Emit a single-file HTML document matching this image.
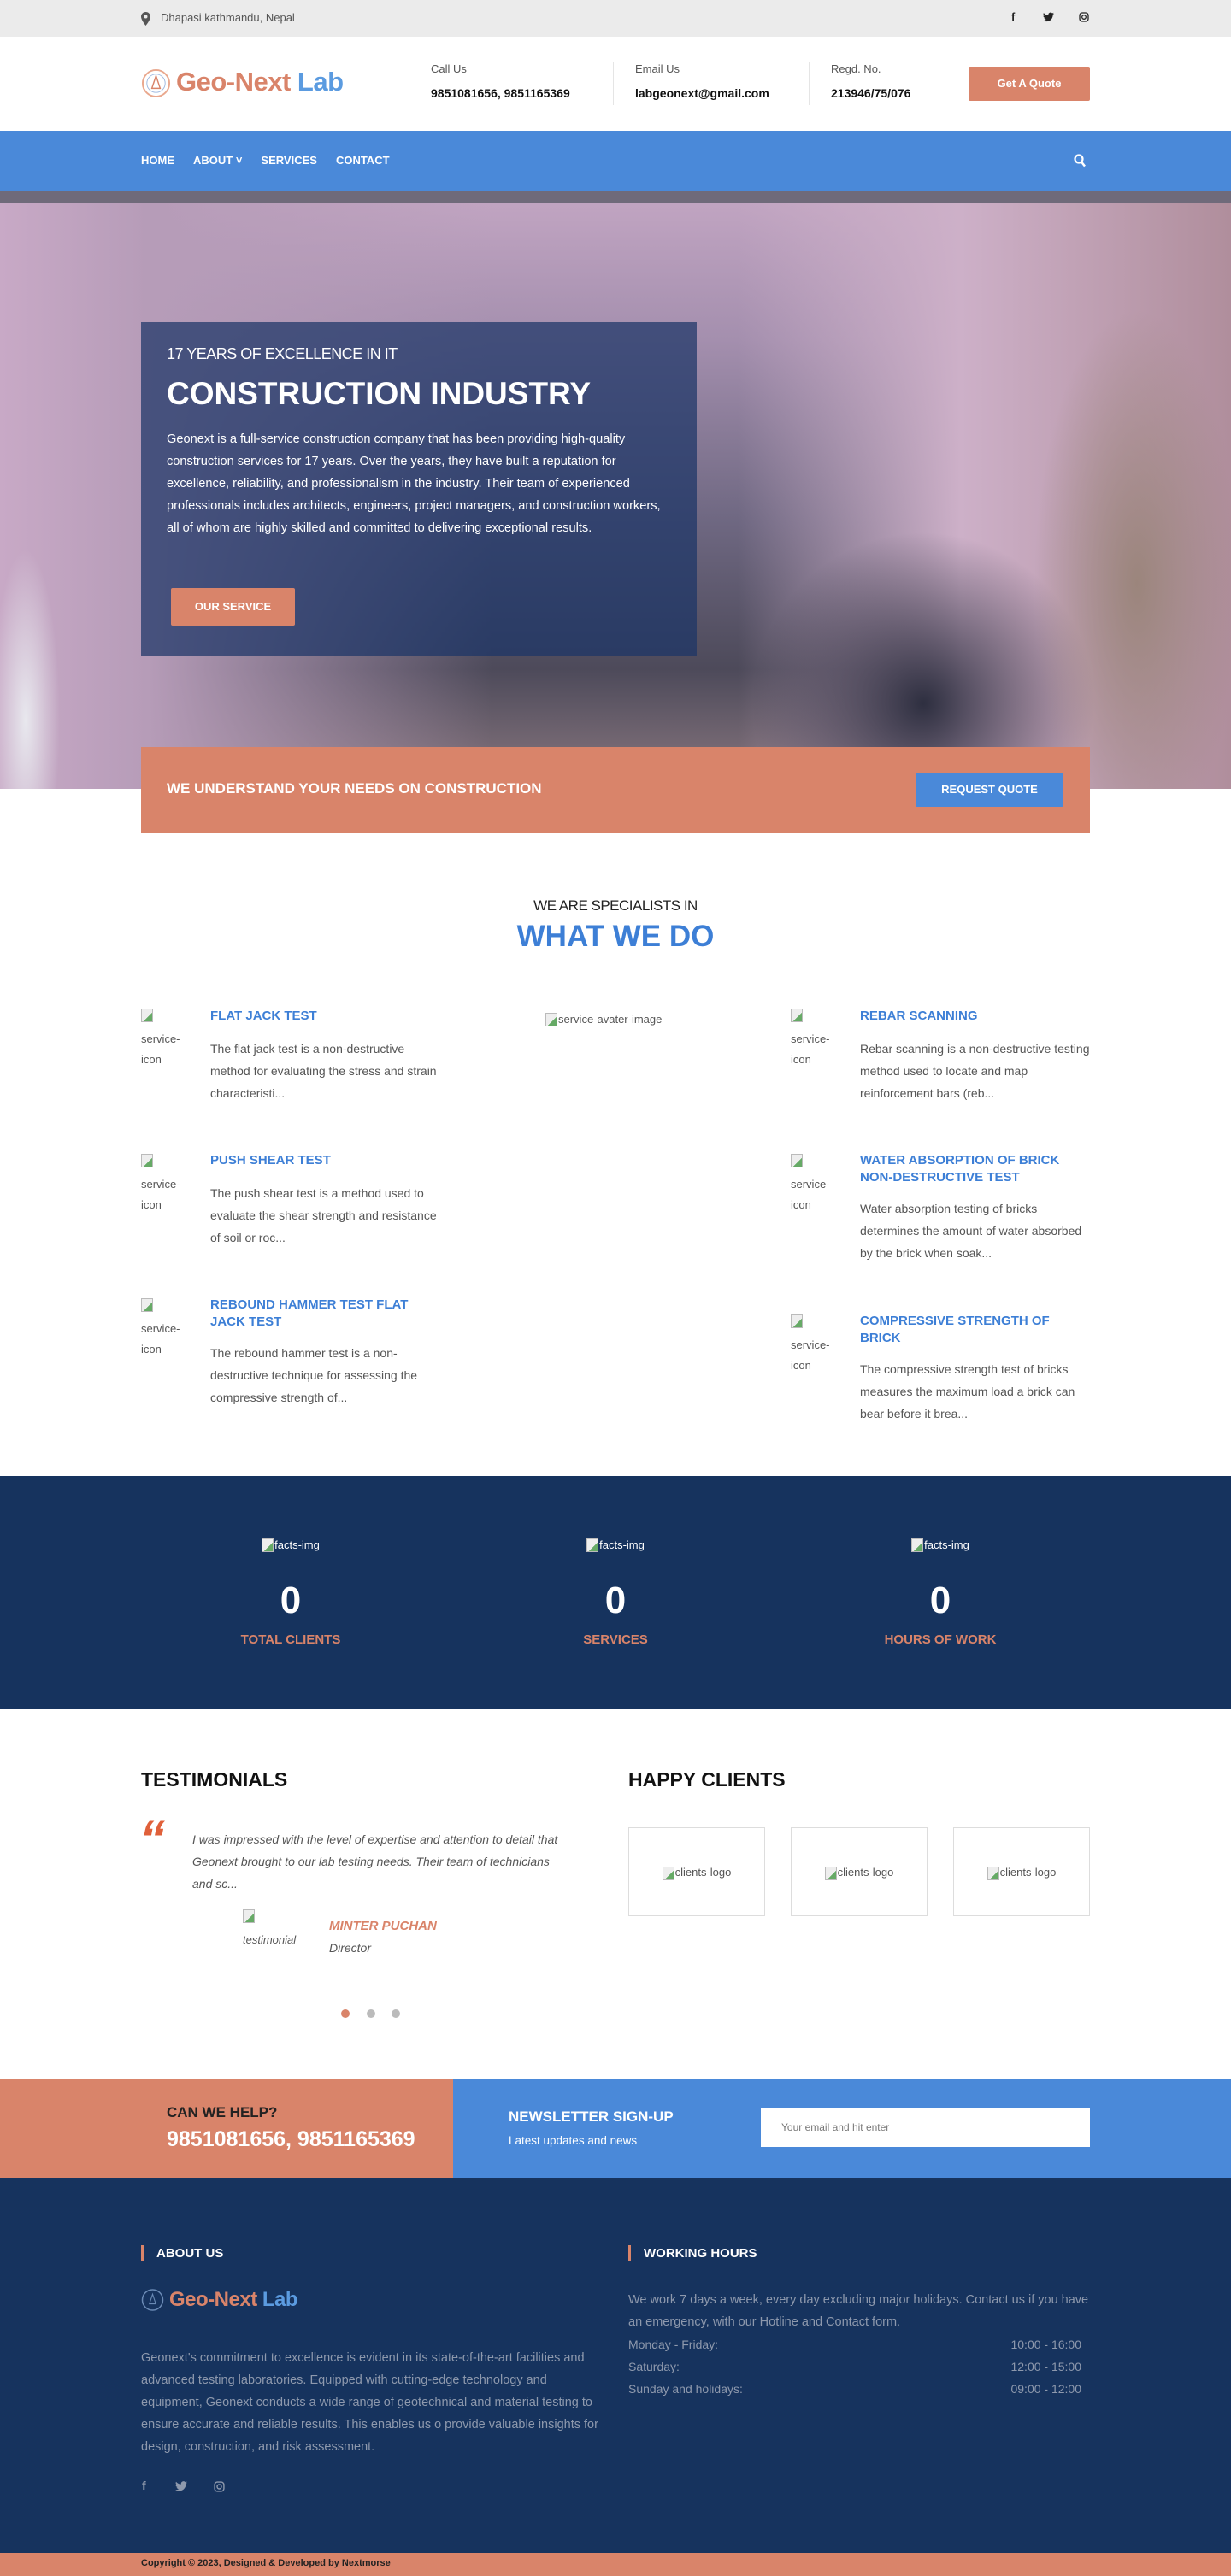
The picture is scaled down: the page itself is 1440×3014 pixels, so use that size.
<!DOCTYPE html>
<html><head><meta charset="utf-8"><style>
*{margin:0;padding:0;box-sizing:border-box}
body{width:1440px;height:3014px;position:relative;font-family:"Liberation Sans",sans-serif;background:#fff;overflow:hidden;color:#333}
.a{position:absolute}
.h{font-family:"Liberation Sans",sans-serif;font-weight:bold}
.svc-t{color:#3d7fd6;font-weight:bold;font-size:15px;line-height:20px;width:270px}
.svc-d{color:#555;font-size:14px;line-height:26px;width:272px}
.ic{color:#555;font-size:13px;line-height:24px;width:60px}
.brk{display:inline-block;width:14px;height:16px;border:1px solid #bbb;background:linear-gradient(135deg,#eee 60%,#6a6 60%);vertical-align:top;margin-right:1px}
</style></head><body>
<!-- top bar -->
<div class="a" style="left:0;top:0;width:1440px;height:43px;background:#ebebeb"></div>
<svg class="a" style="left:165px;top:14px" width="11" height="16" viewBox="0 0 11 16"><path d="M5.5 0C2.5 0 0 2.4 0 5.4 0 9.5 5.5 16 5.5 16S11 9.5 11 5.4C11 2.4 8.5 0 5.5 0zm0 7.5a2 2 0 110-4 2 2 0 010 4z" fill="#555"/></svg>
<div class="a" style="left:188px;top:13px;font-size:13px;color:#555">Dhapasi kathmandu, Nepal</div>
<div class="a" style="left:1183px;top:12px;font-size:13px;color:#222;font-weight:bold">f</div>
<svg class="a" style="left:1220px;top:14px" width="13" height="12" viewBox="0 0 24 20"><path d="M24 2.4a10 10 0 01-2.8.8A5 5 0 0023.3.4a10 10 0 01-3.1 1.2A4.9 4.9 0 0011.8 6 14 14 0 011.7.9a4.9 4.9 0 001.5 6.6A4.9 4.9 0 01.9 6.9v.1a4.9 4.9 0 004 4.8 5 5 0 01-2.2.1 4.9 4.9 0 004.6 3.4A9.9 9.9 0 010 17.3 14 14 0 007.5 19.5c9 0 14-7.5 14-14v-.6A10 10 0 0024 2.4z" fill="#222"/></svg>
<svg class="a" style="left:1262px;top:14px" width="12" height="12" viewBox="0 0 12 12"><rect x="1" y="1" width="10" height="10" rx="3" fill="none" stroke="#222" stroke-width="1.3"/><circle cx="6" cy="6" r="2.3" fill="none" stroke="#222" stroke-width="1.3"/></svg>
<!-- header -->
<svg class="a" style="left:165px;top:80px" width="35" height="35" viewBox="0 0 36 36"><circle cx="18" cy="18" r="16" fill="none" stroke="#e9a88e" stroke-width="2"/><circle cx="18" cy="18" r="11" fill="none" stroke="#9fb9e0" stroke-width="1"/><path d="M18 9l-5 15h10z" fill="none" stroke="#d9846a" stroke-width="1.5"/></svg>
<div class="a h" style="left:206px;top:78px;font-size:31px;color:#d9846a;letter-spacing:-0.5px">Geo-Next <span style="color:#5b9be0">Lab</span></div>
<div class="a" style="left:504px;top:73px;font-size:13px;color:#555">Call Us</div>
<div class="a h" style="left:504px;top:101px;font-size:14px;color:#111">9851081656, 9851165369</div>
<div class="a" style="left:717px;top:73px;width:1px;height:50px;background:#e5e5e5"></div>
<div class="a" style="left:743px;top:73px;font-size:13px;color:#555">Email Us</div>
<div class="a h" style="left:743px;top:101px;font-size:14px;color:#111">labgeonext@gmail.com</div>
<div class="a" style="left:946px;top:73px;width:1px;height:50px;background:#e5e5e5"></div>
<div class="a" style="left:972px;top:73px;font-size:13px;color:#555">Regd. No.</div>
<div class="a h" style="left:972px;top:101px;font-size:14px;color:#111">213946/75/076</div>
<div class="a h" style="left:1133px;top:78px;width:142px;height:40px;background:#d9846a;border-radius:2px;color:#fff;font-size:13px;text-align:center;line-height:40px">Get A Quote</div>
<!-- nav -->
<div class="a" style="left:0;top:153px;width:1440px;height:70px;background:#4a89d9"></div>
<div class="a h" style="left:165px;top:180px;font-size:13px;color:#fff">HOME<span style="margin-left:22px">ABOUT ˅</span><span style="margin-left:22px">SERVICES</span><span style="margin-left:22px">CONTACT</span></div>
<svg class="a" style="left:1256px;top:180px" width="15" height="16" viewBox="0 0 15 16"><circle cx="6" cy="6" r="4.5" fill="none" stroke="#fff" stroke-width="2.2"/><path d="M9 9.5l4 5" stroke="#fff" stroke-width="2.5"/></svg>
<!-- hero -->
<div class="a" style="left:0;top:223px;width:1440px;height:700px;background:
radial-gradient(ellipse 40px 200px at 30px 620px,#e8e8ee,transparent),
radial-gradient(ellipse 110px 80px at 60px 820px,#c9c6cc,transparent),
radial-gradient(ellipse 120px 320px at 1330px 460px,#9b857c,transparent),
radial-gradient(ellipse 200px 200px at 1080px 600px,#2e2f40,transparent),
radial-gradient(ellipse 300px 90px at 500px 850px,#a89294,transparent),
linear-gradient(90deg,#c8a9c6 0%,#b69cb8 12%,rgba(0,0,0,0) 40%,rgba(0,0,0,0) 60%,#cdb0c8 78%,#b08e9c 100%),
linear-gradient(180deg,#c3a6c3 0%,#a48fae 25%,#6f6882 55%,#4d4a5a 80%,#8a7880 100%)"></div>
<div class="a" style="left:0;top:223px;width:1440px;height:14px;background:#6f6a7a"></div>
<div class="a" style="left:165px;top:377px;width:650px;height:391px;background:rgba(28,52,102,0.72)"></div>
<div class="a" style="left:195px;top:404px;font-size:18px;color:#fff;font-weight:300;letter-spacing:-0.5px">17 YEARS OF EXCELLENCE IN IT</div>
<div class="a h" style="left:195px;top:440px;font-size:37px;color:#fff">CONSTRUCTION INDUSTRY</div>
<div class="a" style="left:195px;top:501px;width:595px;font-size:14.6px;line-height:26px;color:#fff">Geonext is a full-service construction company that has been providing high-quality construction services for 17 years. Over the years, they have built a reputation for excellence, reliability, and professionalism in the industry. Their team of experienced professionals includes architects, engineers, project managers, and construction workers, all of whom are highly skilled and committed to delivering exceptional results.</div>
<div class="a h" style="left:200px;top:688px;width:145px;height:44px;background:#d9846a;color:#fff;font-size:13px;text-align:center;line-height:44px;border-radius:2px">OUR SERVICE</div>
<div class="a" style="left:165px;top:874px;width:1110px;height:101px;background:#d9846a"></div>
<div class="a h" style="left:195px;top:913px;font-size:17px;color:#fff">WE UNDERSTAND YOUR NEEDS ON CONSTRUCTION</div>
<div class="a h" style="left:1071px;top:904px;width:173px;height:40px;background:#4a89d9;color:#fff;font-size:13px;text-align:center;line-height:40px;border-radius:2px">REQUEST QUOTE</div>
<!-- what we do -->
<div class="a" style="left:0;top:1050px;width:1440px;text-align:center;font-size:17px;color:#222;font-weight:300;letter-spacing:-0.5px">WE ARE SPECIALISTS IN</div>
<div class="a h" style="left:0;top:1076px;width:1440px;text-align:center;font-size:35px;color:#3d7fd6">WHAT WE DO</div>

<div class="a ic" style="left:165px;top:1180px"><span class="brk"></span><br>service-<br>icon</div>
<div class="a svc-t" style="left:246px;top:1179px">FLAT JACK TEST</div>
<div class="a svc-d" style="left:246px;top:1214px">The flat jack test is a non-destructive method for evaluating the stress and strain characteristi...</div>
<div class="a ic" style="left:165px;top:1350px"><span class="brk"></span><br>service-<br>icon</div>
<div class="a svc-t" style="left:246px;top:1348px">PUSH SHEAR TEST</div>
<div class="a svc-d" style="left:246px;top:1383px">The push shear test is a method used to evaluate the shear strength and resistance of soil or roc...</div>
<div class="a ic" style="left:165px;top:1519px"><span class="brk"></span><br>service-<br>icon</div>
<div class="a svc-t" style="left:246px;top:1517px">REBOUND HAMMER TEST FLAT JACK TEST</div>
<div class="a svc-d" style="left:246px;top:1570px">The rebound hammer test is a non-destructive technique for assessing the compressive strength of...</div>

<div class="a" style="left:638px;top:1185px;font-size:13px;color:#555"><span class="brk"></span>service-avater-image</div>

<div class="a ic" style="left:925px;top:1180px"><span class="brk"></span><br>service-<br>icon</div>
<div class="a svc-t" style="left:1006px;top:1179px">REBAR SCANNING</div>
<div class="a svc-d" style="left:1006px;top:1214px">Rebar scanning is a non-destructive testing method used to locate and map reinforcement bars (reb...</div>
<div class="a ic" style="left:925px;top:1350px"><span class="brk"></span><br>service-<br>icon</div>
<div class="a svc-t" style="left:1006px;top:1348px">WATER ABSORPTION OF BRICK NON-DESTRUCTIVE TEST</div>
<div class="a svc-d" style="left:1006px;top:1401px">Water absorption testing of bricks determines the amount of water absorbed by the brick when soak...</div>
<div class="a ic" style="left:925px;top:1538px"><span class="brk"></span><br>service-<br>icon</div>
<div class="a svc-t" style="left:1006px;top:1536px">COMPRESSIVE STRENGTH OF BRICK</div>
<div class="a svc-d" style="left:1006px;top:1589px">The compressive strength test of bricks measures the maximum load a brick can bear before it brea...</div>
<!-- facts -->
<div class="a" style="left:0;top:1727px;width:1440px;height:273px;background:#16335e"></div>
<div class="a" style="left:240px;top:1800px;width:200px;text-align:center;font-size:13px;color:#fff"><span class="brk"></span>facts-img</div>
<div class="a" style="left:620px;top:1800px;width:200px;text-align:center;font-size:13px;color:#fff"><span class="brk"></span>facts-img</div>
<div class="a" style="left:1000px;top:1800px;width:200px;text-align:center;font-size:13px;color:#fff"><span class="brk"></span>facts-img</div>
<div class="a h" style="left:240px;top:1848px;width:200px;text-align:center;font-size:44px;color:#fff">0</div>
<div class="a h" style="left:620px;top:1848px;width:200px;text-align:center;font-size:44px;color:#fff">0</div>
<div class="a h" style="left:1000px;top:1848px;width:200px;text-align:center;font-size:44px;color:#fff">0</div>
<div class="a h" style="left:240px;top:1910px;width:200px;text-align:center;font-size:15px;color:#d9846a">TOTAL CLIENTS</div>
<div class="a h" style="left:620px;top:1910px;width:200px;text-align:center;font-size:15px;color:#d9846a">SERVICES</div>
<div class="a h" style="left:1000px;top:1910px;width:200px;text-align:center;font-size:15px;color:#d9846a">HOURS OF WORK</div>
<!-- testimonials -->
<div class="a h" style="left:165px;top:2069px;font-size:23px;color:#111">TESTIMONIALS</div>
<div class="a h" style="left:735px;top:2069px;font-size:23px;color:#111">HAPPY CLIENTS</div>
<div class="a h" style="left:163px;top:2122px;font-size:60px;color:#e0603a;font-style:italic;line-height:60px">“</div>
<div class="a" style="left:225px;top:2139px;width:430px;font-size:14px;line-height:26px;color:#555;font-style:italic">I was impressed with the level of expertise and attention to detail that Geonext brought to our lab testing needs. Their team of technicians and sc...</div>
<div class="a" style="left:284px;top:2234px;font-size:13px;color:#555;font-style:italic;line-height:24px"><span class="brk"></span><br>testimonial</div>
<div class="a h" style="left:385px;top:2245px;font-size:15px;color:#d9846a;font-style:italic">MINTER PUCHAN</div>
<div class="a" style="left:385px;top:2271px;font-size:14px;color:#555;font-style:italic">Director</div>
<div class="a" style="left:399px;top:2351px;width:10px;height:10px;border-radius:5px;background:#d9846a"></div>
<div class="a" style="left:429px;top:2351px;width:10px;height:10px;border-radius:5px;background:#bbb"></div>
<div class="a" style="left:458px;top:2351px;width:10px;height:10px;border-radius:5px;background:#bbb"></div>
<div class="a" style="left:735px;top:2138px;width:160px;height:104px;border:1px solid #ddd;font-size:13px;color:#555;text-align:center;line-height:104px"><span class="brk" style="vertical-align:middle"></span>clients-logo</div>
<div class="a" style="left:925px;top:2138px;width:160px;height:104px;border:1px solid #ddd;font-size:13px;color:#555;text-align:center;line-height:104px"><span class="brk" style="vertical-align:middle"></span>clients-logo</div>
<div class="a" style="left:1115px;top:2138px;width:160px;height:104px;border:1px solid #ddd;font-size:13px;color:#555;text-align:center;line-height:104px"><span class="brk" style="vertical-align:middle"></span>clients-logo</div>
<!-- CTA -->
<div class="a" style="left:0;top:2433px;width:530px;height:115px;background:#d9846a"></div>
<div class="a" style="left:530px;top:2433px;width:910px;height:115px;background:#4a89d9"></div>
<div class="a h" style="left:195px;top:2462px;font-size:17px;color:#222">CAN WE HELP?</div>
<div class="a h" style="left:195px;top:2489px;font-size:25px;color:#fff">9851081656, 9851165369</div>
<div class="a h" style="left:595px;top:2467px;font-size:17px;color:#fff">NEWSLETTER SIGN-UP</div>
<div class="a" style="left:595px;top:2497px;font-size:13.5px;color:#fff">Latest updates and news</div>
<div class="a" style="left:890px;top:2467px;width:385px;height:45px;background:#fff;font-size:12px;color:#777;line-height:45px;padding-left:24px">Your email and hit enter</div>
<!-- footer -->
<div class="a" style="left:0;top:2548px;width:1440px;height:439px;background:#16335e"></div>
<div class="a h" style="left:165px;top:2627px;height:19px;border-left:3px solid #d9846a;padding-left:15px;font-size:15px;color:#fff;line-height:19px">ABOUT US</div>
<div class="a h" style="left:735px;top:2627px;height:19px;border-left:3px solid #d9846a;padding-left:15px;font-size:15px;color:#fff;line-height:19px">WORKING HOURS</div>
<svg class="a" style="left:165px;top:2677px" width="27" height="28" viewBox="0 0 36 36"><circle cx="18" cy="18" r="16" fill="none" stroke="#6a8ab5" stroke-width="2"/><path d="M18 9l-5 15h10z" fill="none" stroke="#6a8ab5" stroke-width="1.5"/></svg>
<div class="a h" style="left:198px;top:2677px;font-size:24px;color:#d9846a;letter-spacing:-0.5px">Geo-Next <span style="color:#5b9be0">Lab</span></div>
<div class="a" style="left:165px;top:2746px;width:545px;font-size:14.5px;line-height:26px;color:#8e99ad">Geonext's commitment to excellence is evident in its state-of-the-art facilities and advanced testing laboratories. Equipped with cutting-edge technology and equipment, Geonext conducts a wide range of geotechnical and material testing to ensure accurate and reliable results. This enables us o provide valuable insights for design, construction, and risk assessment.</div>
<div class="a" style="left:166px;top:2900px;font-size:14px;color:#8e99ad;font-weight:bold">f</div>
<svg class="a" style="left:205px;top:2903px" width="14" height="12" viewBox="0 0 24 20"><path d="M24 2.4a10 10 0 01-2.8.8A5 5 0 0023.3.4a10 10 0 01-3.1 1.2A4.9 4.9 0 0011.8 6 14 14 0 011.7.9a4.9 4.9 0 001.5 6.6A4.9 4.9 0 01.9 6.9v.1a4.9 4.9 0 004 4.8 5 5 0 01-2.2.1 4.9 4.9 0 004.6 3.4A9.9 9.9 0 010 17.3 14 14 0 007.5 19.5c9 0 14-7.5 14-14v-.6A10 10 0 0024 2.4z" fill="#8e99ad"/></svg>
<svg class="a" style="left:250px;top:2903px" width="13" height="13" viewBox="0 0 12 12"><rect x="1" y="1" width="10" height="10" rx="3" fill="none" stroke="#8e99ad" stroke-width="1.3"/><circle cx="6" cy="6" r="2.3" fill="none" stroke="#8e99ad" stroke-width="1.3"/></svg>
<div class="a" style="left:735px;top:2678px;width:540px;font-size:14.5px;line-height:26px;color:#8e99ad">We work 7 days a week, every day excluding major holidays. Contact us if you have an emergency, with our Hotline and Contact form.</div>
<div class="a" style="left:735px;top:2730px;width:530px;font-size:14px;line-height:26px;color:#8e99ad">
<div style="display:flex;justify-content:space-between"><span>Monday - Friday:</span><span>10:00 - 16:00</span></div>
<div style="display:flex;justify-content:space-between"><span>Saturday:</span><span>12:00 - 15:00</span></div>
<div style="display:flex;justify-content:space-between"><span>Sunday and holidays:</span><span>09:00 - 12:00</span></div>
</div>
<div class="a" style="left:0;top:2987px;width:1440px;height:27px;background:#d9846a"></div>
<div class="a h" style="left:165px;top:2993px;font-size:11px;color:#222">Copyright © 2023, Designed &amp; Developed by Nextmorse</div>
</body></html>
